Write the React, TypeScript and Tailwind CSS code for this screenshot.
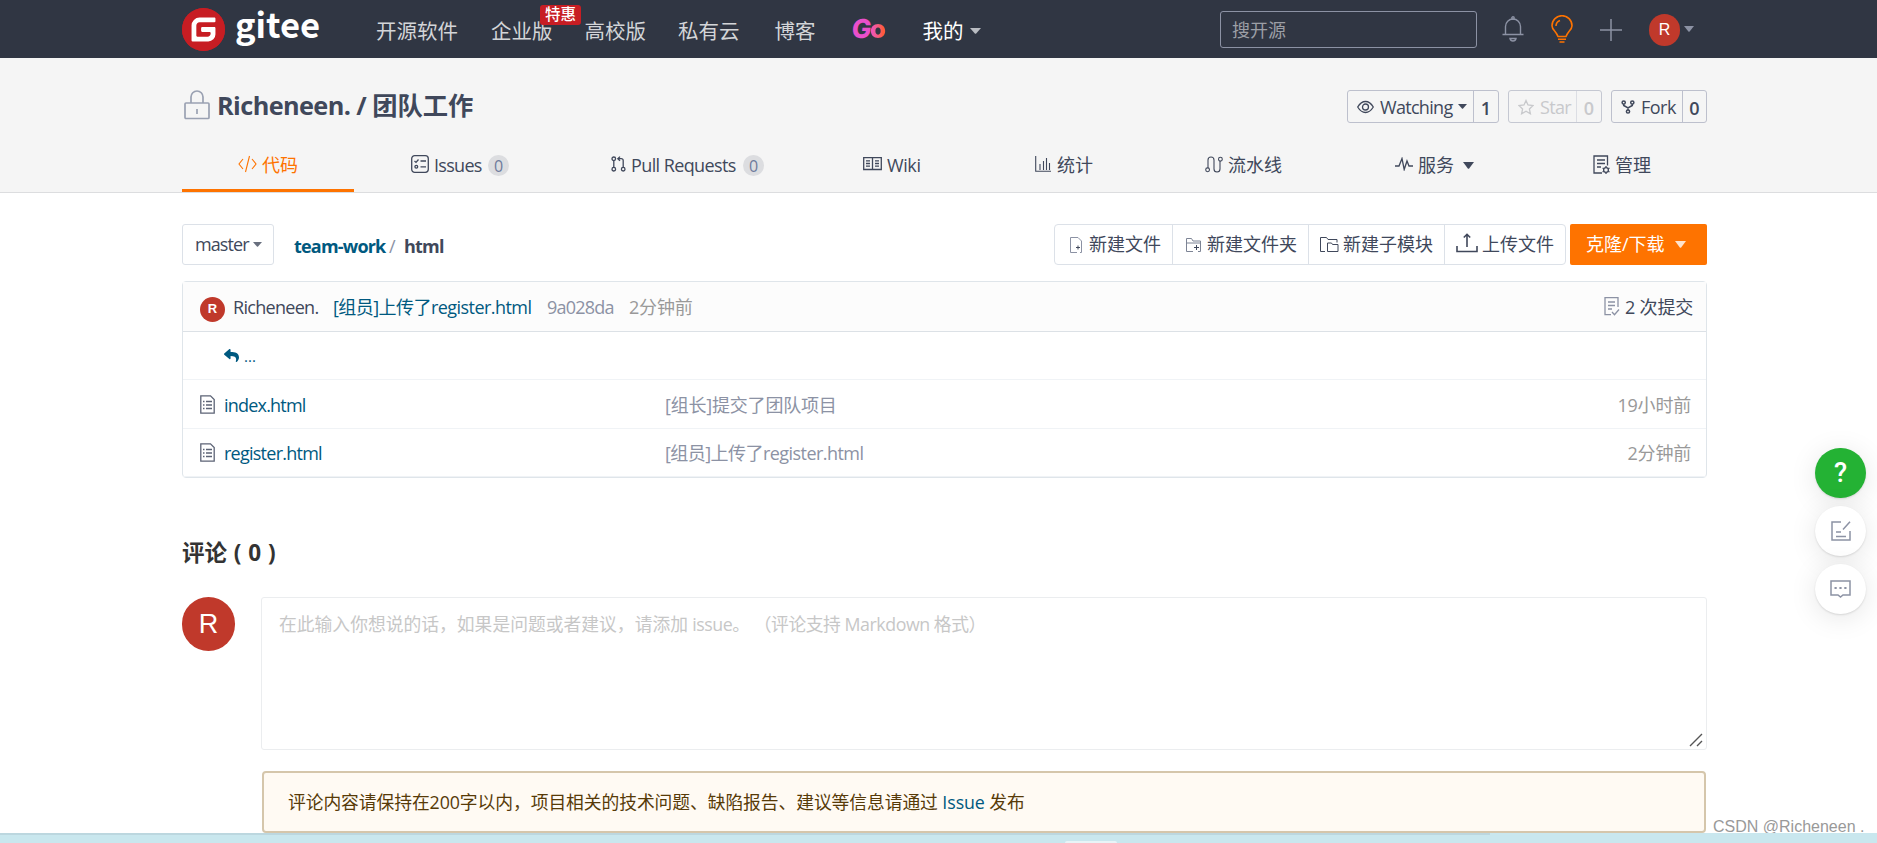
import type { ReactNode } from 'react'
import { SiGitee } from 'react-icons/si'
import { FaReply } from 'react-icons/fa'

interface IconProps {
  className?: string
}

interface Tab {
  id: string
  label: string
  icon: ReactNode
  box: string
  text?: string
  count?: number
  caret?: boolean
}

interface FileRow {
  name: string
  message: string
  time: string
  nameClass: string
  messageClass: string
  height: string
}

const Svg = ({ className = '', box, children, width = 1.3 }: IconProps & { box: string; children: ReactNode; width?: number }) => (
  <svg viewBox={box} className={`shrink-0 ${className}`} fill="none" stroke="currentColor" strokeWidth={width}>
    {children}
  </svg>
)

const Caret = ({ className = '' }: IconProps) => (
  <svg viewBox="0 0 10 6" preserveAspectRatio="none" className={`shrink-0 ${className}`} fill="currentColor">
    <path d="M0 0h10L5.6 5.5q-.6.6-1.2 0z" />
  </svg>
)

const LockIcon = () => (
  <Svg box="0 0 26 30" className="w-[26px] h-[30px] text-[#9aa1b2]" width={1.7}>
    <rect x="1" y="13" width="24" height="15.5" rx="1" />
    <path d="M7 13V7a6 6 0 0 1 12 0v6M13 19v5" />
  </Svg>
)

const CodeIcon = () => (
  <Svg box="0 0 19 18" className="w-[19px] h-[18px]" width={1.1}>
    <path d="M5 4 1 9l4 5M14 4l4 5-4 5M11.5 1l-4 16" />
  </Svg>
)

const IssueIcon = () => (
  <Svg box="0 0 18 18" className="w-[18px] h-[18px]">
    <rect x=".7" y=".7" width="16.6" height="16.6" rx="3" />
    <path d="M3.5 6 5 7.4 7.5 4.5M9.5 6H15M9.5 11.8H15" />
    <circle cx="5.3" cy="11.8" r="1.4" />
  </Svg>
)

const PullIcon = () => (
  <Svg box="0 0 15 16" className="w-[15px] h-[16px]">
    <circle cx="2.8" cy="2.8" r="1.8" />
    <circle cx="2.8" cy="13.2" r="1.8" />
    <circle cx="12.2" cy="13.2" r="1.8" />
    <path d="M2.8 4.6v6.8M12.2 11.4V4.5q0-1.8-2-1.8H7M9 .6 6.8 2.7 9 4.8" />
  </Svg>
)

const WikiIcon = () => (
  <Svg box="0 0 19 14" className="w-[19px] h-[14px]">
    <path d="M.7.7h17.6v11.8H.7zM9.5.7v12.6M3 3.8h4M3 6.5h4M3 9.2h4M12 3.8h4M12 6.5h4M12 9.2h4" />
  </Svg>
)

const ChartIcon = () => (
  <Svg box="0 0 17 16" className="w-[17px] h-[16px]" width={1.1}>
    <path d="M.7 0v15.3H16M5 14V8M8.5 14V5M11.5 14V2M14.5 14V7" />
  </Svg>
)

const PipeIcon = () => (
  <Svg box="0 0 18 17" className="w-[18px] h-[17px]" width={1.1}>
    <circle cx="2.6" cy="13.8" r="1.9" />
    <circle cx="15.4" cy="3.2" r="1.9" />
    <path d="M3 12V4q0-3 3-3t3 3v9q0 3 3 3t3-3V5" />
  </Svg>
)

const PulseIcon = () => (
  <Svg box="0 0 18 14" className="w-[18px] h-[14px]">
    <path d="M0 9h4L7 1.5l2.2 11L12 4l2 5h4" />
  </Svg>
)

const ManageIcon = () => (
  <Svg box="0 0 17 19" className="w-[17px] h-[19px]">
    <path d="M14.5 10.5V1H1v17h8M4 5h8M4 8.5h8M4 12h4" />
    <circle cx="13" cy="15" r="2.4" />
    <path d="M13 11v1.5M13 17.5V19M9.6 13l1.2.8M15.2 16.2l1.3.8M9.6 17l1.2-.8M15.2 13.8l1.3-.8" />
  </Svg>
)

const FileIcon = () => (
  <Svg box="0 0 15 19" className="w-[15px] h-[19px]">
    <path d="M.8.8h9.7l3.7 3.7v13.7H.8zM3 6.5h1.5M6 6.5h6M3 10h1.5M6 10h6M3 13.5h1.5M6 13.5h6" />
  </Svg>
)

const avatar = 'flex shrink-0 items-center justify-center rounded-full bg-[#c0392b] text-white'

const navLinks = [
  { label: '开源软件', gap: 'ml-[57px]' },
  { label: '企业版', gap: 'ml-[33px]' },
  { label: '高校版', gap: 'ml-[32px]' },
  { label: '私有云', gap: 'ml-[32px]' },
  { label: '博客', gap: 'ml-[35px]' },
]

const tabs: Tab[] = [
  { id: 'code', label: '代码', icon: <CodeIcon />, box: 'w-[172px] pl-[56px]' },
  { id: 'issues', label: 'Issues', icon: <IssueIcon />, box: 'w-[212px] pl-[57px]', text: 'w-[47px] tracking-[-0.7px]', count: 0 },
  { id: 'pulls', label: 'Pull Requests', icon: <PullIcon />, box: 'w-[242px] pl-[45px]', text: 'w-[105px] tracking-[-0.6px]', count: 0 },
  { id: 'wiki', label: 'Wiki', icon: <WikiIcon />, box: 'w-[169px] pl-[55px]', text: 'tracking-[-0.4px]' },
  { id: 'stats', label: '统计', icon: <ChartIcon />, box: 'w-[173px] pl-[58px]' },
  { id: 'pipeline', label: '流水线', icon: <PipeIcon />, box: 'w-[188px] pl-[55px]' },
  { id: 'service', label: '服务', icon: <PulseIcon />, box: 'w-[193px] pl-[57px]', caret: true },
  { id: 'manage', label: '管理', icon: <ManageIcon />, box: 'w-[176px] pl-[62px]' },
]

const files: FileRow[] = [
  {
    name: 'index.html',
    message: '[组长]提交了团队项目',
    time: '19小时前',
    nameClass: 'tracking-[-0.8px]',
    messageClass: 'tracking-[-0.2px]',
    height: 'h-[49px]',
  },
  {
    name: 'register.html',
    message: '[组员]上传了register.html',
    time: '2分钟前',
    nameClass: 'tracking-[-0.75px]',
    messageClass: 'tracking-[-0.55px]',
    height: 'h-[48px]',
  },
]

function NavBar() {
  return (
    <header className="h-[58px] shrink-0 bg-[#303643]">
      <div className="ml-[182px] flex h-full w-[1525px] items-center">
        <div className="flex size-[43px] shrink-0 items-center justify-center rounded-full bg-[#c71d23]">
          <span className="flex size-[36px] items-center justify-center rounded-full bg-white">
            <SiGitee className="size-[43px] shrink-0 text-[#c71d23]" />
          </span>
        </div>
        <span className="-mt-[12px] ml-[10px] w-[84px] font-['Noto_Sans_CJK_SC',sans-serif] text-[34.5px] leading-[52px] font-bold text-white">
          gitee
        </span>
        <nav className="flex items-center pt-[3px] text-[20.5px] leading-[30px] text-[#d3d5d8]">
          {navLinks.map((link) => (
            <a key={link.label} className={`relative whitespace-nowrap ${link.gap}`}>
              {link.label}
              {link.label === '企业版' && (
                <span className="absolute -top-[11px] left-[49px] flex h-5 w-[41px] items-center justify-center rounded-[3px] bg-[#c71d23] text-[15.5px] leading-none font-medium text-white">
                  特惠
                </span>
              )}
            </a>
          ))}
          <span className="ml-[36px] flex w-[37px] items-center">
            <span className="-mt-[3px] -skew-x-6 font-['Inter',sans-serif] text-[26px] leading-[28px] font-extrabold text-[#ea4fca]">
              G
            </span>
            <span className="-mt-[3px] -ml-px bg-linear-to-r from-[#ea4fca] to-[#ff5a3c] to-80% bg-clip-text font-['Inter',sans-serif] text-[26px] leading-[28px] font-extrabold text-transparent">
              o
            </span>
          </span>
          <a className="ml-[34px] flex items-center whitespace-nowrap text-white">
            我的
            <Caret className="ml-[6px] h-[6px] w-[11px] text-[#b9bcc2]" />
          </a>
        </nav>
        <div className="ml-auto flex items-center">
          <div className="flex h-[37px] w-[257px] items-center rounded-[3px] border border-[#8c92a4] pt-[2px] pl-[11px] text-[18px] text-[#9c9fa6]">
            搜开源
          </div>
          <Svg box="0 0 22 26" className="ml-[25px] h-[26px] w-[22px] text-[#8c92a4]" width={1.4}>
            <path d="M.5 18.5h21M3.500 18.500V10.500a7.500 7.500 0 0 1 15 0V18.500" />
            <circle cx="11" cy="2" r="1.2" />
            <path d="M8 22.500h6q-.5 2.500-3 2.500t-3-2.500z" />
          </Svg>
          <Svg box="0 0 24 28" className="ml-[26px] h-[28px] w-[24px] text-[#fe7300]" width={1.6}>
            <path d="M8 21.500Q7 19 5 16.500Q2 13.500 2 10.700a10 10 0 0 1 20 0Q22 13.500 19 16.500Q17 19 16 21.500zM6 11q0-4 4-5.500M8 24.300h8M9.500 27h5" />
          </Svg>
          <Svg box="0 0 22 22" className="mt-[2px] ml-[26px] h-[22px] w-[22px] text-[#8c92a4]" width={1.5}>
            <path d="M0 11h22M11 0v22" />
          </Svg>
          <span className={`${avatar} mt-[2px] ml-[27px] h-[32px] w-[31px] font-['Liberation_Sans',sans-serif] text-[16px]`}>R</span>
          <Caret className="mr-[13px] ml-[4px] h-[6px] w-[10px] text-[#8c92a4]" />
        </div>
      </div>
    </header>
  )
}

function RepoHeader() {
  const button = 'flex h-[33px] items-stretch rounded-[3px] border text-[18px] leading-[34px]'
  return (
    <section className="h-[135px] shrink-0 border-b border-[#dcdddf] bg-[#f5f5f5]">
      <div className="ml-[182px] flex h-full w-[1525px] flex-col">
        <div className="flex h-[80px] items-start pt-[32px]">
          <div className="ml-[2px] flex items-center">
            <LockIcon />
            <h1 className="ml-[7px] flex h-[30px] items-center pt-px text-[25.3px] font-bold whitespace-pre text-[#40485b]">
              <span className="tracking-[-0.6px]">Richeneen. / </span>
              团队工作
            </h1>
          </div>
          <div className="ml-auto flex gap-[9px] text-[#40485b]">
            <div className={`${button} w-[152px] border-[#bdc0cd]`}>
              <span className="flex flex-1 items-center border-r border-[#bdc0cd] pl-[9px]">
                <Svg box="0 0 17 14" className="h-[14px] w-[17px]">
                  <path d="M.7 7Q4 1.500 8.500 1.500T16.300 7Q13 12.500 8.500 12.500T.7 7z" />
                  <circle cx="8.5" cy="7" r="3" />
                </Svg>
                <span className="ml-[6px] w-[73px] tracking-[-0.7px]">Watching</span>
                <Caret className="ml-[5px] h-[5px] w-[9px]" />
              </span>
              <b className="w-[24px] text-center font-semibold">1</b>
            </div>
            <div className={`${button} w-[94px] border-[#c5c8d2] text-[#c8c9cc]`}>
              <span className="flex flex-1 items-center border-r border-[#dcdee4] pl-[9px]">
                <Svg box="0 0 16 16" className="h-[16px] w-[16px]">
                  <path d="m8 1.500 2 4.500 5 .6-3.600 3.300 1 4.900L8 12.300l-4.400 2.500 1-4.900L1 6.600 6 6z" />
                </Svg>
                <span className="ml-[6px] tracking-[-0.7px]">Star</span>
              </span>
              <b className="w-[24px] text-center font-semibold">0</b>
            </div>
            <div className={`${button} w-[96px] border-[#bdc0cd]`}>
              <span className="flex flex-1 items-center border-r border-[#bdc0cd] pl-[9px]">
                <Svg box="0 0 14 14" className="h-[14px] w-[14px]" width={1.5}>
                  <circle cx="2.7" cy="2.5" r="1.6" />
                  <circle cx="11.3" cy="2.5" r="1.6" />
                  <circle cx="7" cy="11.5" r="1.6" />
                  <path d="M2.700 4v1.500L7 8l4.300-2.500V4M7 8v2" />
                </Svg>
                <span className="ml-[6px] tracking-[-0.5px]">Fork</span>
              </span>
              <b className="w-[23px] text-center font-semibold">0</b>
            </div>
          </div>
        </div>
        <nav className="flex h-[55px] text-[18px] text-[#40485b]">
          {tabs.map((tab) => (
            <a
              key={tab.id}
              className={`flex shrink-0 items-center border-b-[3px] pt-[4px] whitespace-nowrap ${tab.box} ${
                tab.id === 'code' ? 'border-[#fe7300] text-[#fe7300]' : 'border-transparent'
              }`}
            >
              <span className="mb-[2px]">{tab.icon}</span>
              <span className={`ml-[5px] ${tab.text ?? ''}`}>{tab.label}</span>
              {tab.count !== undefined && (
                <span className="mt-px ml-[7px] flex size-[21px] items-center justify-center rounded-full bg-[#dcdde0] text-[16px] text-[#6e7b9c]">
                  {tab.count}
                </span>
              )}
              {tab.caret && <Caret className="ml-[9px] h-[7px] w-[11px]" />}
            </a>
          ))}
        </nav>
      </div>
    </section>
  )
}

function Toolbar() {
  const item = 'flex items-center whitespace-nowrap'
  return (
    <div className="flex h-[41px] items-stretch text-[18px] text-[#40485b]">
      <div className="flex w-[92px] items-center rounded-[3px] border border-[#dce1e8] pl-[12px]">
        <span className="w-[54px] tracking-[-0.9px]">master</span>
        <Caret className="ml-[4px] h-[5px] w-[9px] text-[#686f7e]" />
      </div>
      <div className="ml-[20px] flex items-center pt-[4px] font-bold">
        <a className="w-[95px] tracking-[-0.8px] text-[#005980]">team-work</a>
        <span className="w-[15px] font-normal text-[#8c92a4]">/</span>
        <span className="tracking-[-0.8px]">html</span>
      </div>
      <div className="ml-auto flex rounded-[4px] border border-[#dce1e8]">
        <a className={`${item} w-[118px] border-r border-[#dce1e8] pl-[15px]`}>
          <Svg box="0 0 12 16" className="mr-[7px] h-[16px] w-[12px]" width={1}>
            <path d="M7 15.500H.5V.5h7.500L11.500 4v11.500H10" stroke="#8c92a4" />
            <path d="M8 8.500v4M6 10.500h4" />
          </Svg>
          新建文件
        </a>
        <a className={`${item} w-[136px] border-r border-[#dce1e8] pl-[13px]`}>
          <Svg box="0 0 15 14" className="mr-[6px] h-[14px] w-[15px]" width={1}>
            <path d="M7 13.500H.5V.5h5l1.500 2.500h7.500v10.500H12M.5 5h14" stroke="#7d8495" />
            <path d="M10.500 7v5M8 9.500h5" />
          </Svg>
          新建文件夹
        </a>
        <a className={`${item} w-[136px] border-r border-[#dce1e8] pl-[11px]`}>
          <Svg box="0 0 19 15" className="mr-[4px] h-[15px] w-[19px]" width={1}>
            <path d="M5 14.500H.5V.5h6l1.500 2h9v3M7.500 6h4l1 1.500h5.500v7H7.500z" />
          </Svg>
          新建子模块
        </a>
        <a className={`${item} w-[120px] pl-[11px]`}>
          <Svg box="0 0 22 20" className="mr-[4px] mb-[3px] h-[20px] w-[22px]" width={1.6}>
            <path d="M1 13v5.500h20V13M11 14V1.500M7.800 4.500 11 1.300l3.200 3.200" />
          </Svg>
          上传文件
        </a>
      </div>
      <a className={`${item} ml-[4px] w-[137px] rounded-[2px] bg-[#fe7300] pl-[16px] text-white`}>
        克隆/下载
        <Caret className="ml-[10px] h-[7px] w-[11px] text-[#ffe3cc]" />
      </a>
    </div>
  )
}

function FileTable() {
  return (
    <div className="mt-[16px] flex h-[197px] flex-col rounded-[4px] border border-[#dfe5ea] text-[18px]">
      <div className="flex h-[50px] items-center border-b border-[#dce1e6] bg-[#fcfcfc] pt-[2px] pl-[17px] whitespace-nowrap">
        <span className={`${avatar} mt-[3px] size-[25px] font-['Liberation_Sans',sans-serif] text-[13px] font-bold`}>R</span>
        <span className="ml-[8px] w-[100px] tracking-[-0.7px] text-[#40485b]">Richeneen.</span>
        <a className="w-[214px] tracking-[-0.55px] text-[#005980]">[组员]上传了register.html</a>
        <span className="w-[82px] tracking-[-0.8px] text-[#8c92a4]">9a028da</span>
        <span className="tracking-[-0.2px] text-[#999]">2分钟前</span>
        <span className="mr-[13px] ml-auto flex items-center text-[#40485b]">
          <Svg box="0 0 16 19" className="mr-[5px] mb-[3px] h-[19px] w-[16px] text-[#8c92a4]">
            <path d="M14 10V.7H1v17h6M4 5h7M4 8.500h7M4 12h4M8 15l2.500 2.700L15 12.500" />
          </Svg>
          <span className="tracking-[-0.2px]">2 次提交</span>
        </span>
      </div>
      <div className="flex h-[48px] items-center border-b border-[#f0f3f6] pl-[41px] text-[#005980]">
        <FaReply className="size-[15px]" />
        <span className="mt-[2px] ml-[5px] text-[15px]">...</span>
      </div>
      {files.map((file) => (
        <div
          key={file.name}
          className={`flex items-center border-b border-[#f0f3f6] pt-[2px] pr-[15px] pl-[17px] whitespace-nowrap ${file.height}`}
        >
          <span className="mb-[2px] text-[#5c6375]">
            <FileIcon />
          </span>
          <a className={`ml-[9px] w-[441px] text-[#005980] ${file.nameClass}`}>{file.name}</a>
          <span className={`text-[#8c92a4] ${file.messageClass}`}>{file.message}</span>
          <span className="ml-auto tracking-[-0.2px] text-[#999]">{file.time}</span>
        </div>
      ))}
    </div>
  )
}

function Comments() {
  return (
    <section className="mt-[60px]">
      <h2 className="flex h-[30px] items-center text-[22.5px] font-bold whitespace-pre text-[#333] [word-spacing:1px]">评论 ( 0 )</h2>
      <div className="mt-[29px] flex items-start">
        <span className={`${avatar} h-[54px] w-[53px] font-['Liberation_Sans',sans-serif] text-[27px]`}>R</span>
        <div className="ml-[26px] flex-1 text-[17.8px]">
          <div className="relative h-[153px] rounded-[3px] border border-[#ebedef] pt-[12px] pl-[17px] leading-[28px] whitespace-pre text-[#c7c7c7]">
            在此输入你想说的话，如果是问题或者建议，请添加
            <span className="tracking-[-0.45px]"> issue。 （评论支持 Markdown 格式）</span>
            <Svg box="0 0 14 14" className="absolute right-[3px] bottom-[2px] size-[14px] text-[#555]" width={1.4}>
              <path d="M1 13 13 1M8 13l5-5" />
            </Svg>
          </div>
          <div className="mx-px mt-[21px] flex h-[62px] items-center rounded-[4px] border-2 border-[#d5c6ab] bg-[#fffaf3] pl-[24px] tracking-[-0.08px] whitespace-pre text-[#573a08]">
            评论内容请保持在200字以内，项目相关的技术问题、缺陷报告、建议等信息请通过 <a className="text-[#005980]">Issue</a> 发布
          </div>
        </div>
      </div>
    </section>
  )
}

function FloatingTools() {
  const circle = 'flex h-[50px] w-[51px] items-center justify-center rounded-full shadow-[0_1px_2px_rgba(0,0,0,0.12),0_4px_28px_rgba(0,0,0,0.10)]'
  return (
    <div className="absolute top-[448px] right-[11px] flex flex-col gap-[8px]">
      <button className={`${circle} bg-[#24b234] font-['Roboto',sans-serif] text-[27px] font-medium text-white`}>?</button>
      <button className={`${circle} bg-white text-[#8c92a4]`}>
        <Svg box="0 0 20 20" className="size-[20px]" width={1.5}>
          <path d="M10 1H1v18h18v-9M12 8.500 19 .8M5 11h5M5 15.500h10" />
        </Svg>
      </button>
      <button className={`${circle} bg-white text-[#8c92a4]`}>
        <Svg box="0 0 21 18" className="h-[18px] w-[21px]" width={1.5}>
          <path d="M1 1h19v14h-7l-2.500 2L8 15H1z" />
          <path d="M4.500 8h2.200M9.400 8h2.200M14.300 8h2.200" strokeWidth="2.2" />
        </Svg>
      </button>
    </div>
  )
}

export default function App() {
  return (
    <div className="relative flex h-[843px] w-[1877px] flex-col overflow-hidden bg-white font-['Open_Sans','Noto_Sans_CJK_SC',sans-serif]">
      <NavBar />
      <RepoHeader />
      <main className="ml-[182px] w-[1525px] pt-[31px]">
        <Toolbar />
        <FileTable />
        <Comments />
      </main>
      <FloatingTools />
      <span className="absolute right-[12px] bottom-[5px] w-[152px] font-['Liberation_Sans',sans-serif] text-[16px] leading-[22px] whitespace-nowrap text-[#999]">
        CSDN @Richeneen .
      </span>
      <div className="absolute inset-x-0 bottom-0 h-[10px] bg-[#c9e7ee]">
        <div className="h-[2px] w-[1490px] bg-[#bcd7df]" />
        <div className="absolute bottom-0 left-[1065px] h-[2px] w-[52px] rounded-t-[2px] bg-[#e8f4f7]" />
      </div>
    </div>
  )
}
